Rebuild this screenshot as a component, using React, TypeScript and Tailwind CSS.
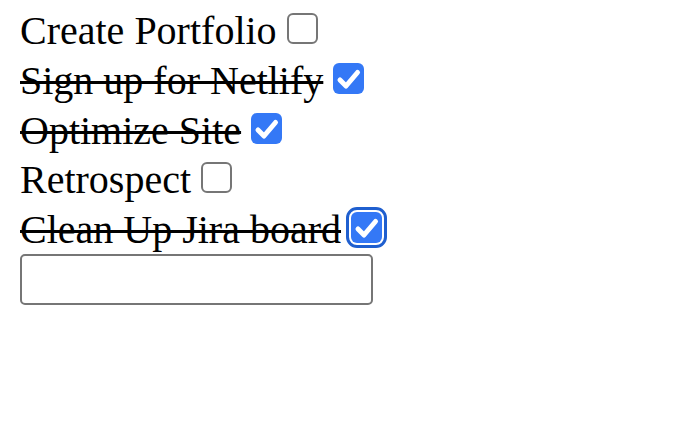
import React from "react";

const items = [
  { text: "Create Portfolio", done: false, focus: false },
  { text: "Sign up for Netlify", done: true, focus: false },
  { text: "Optimize Site", done: true, focus: false },
  { text: "Retrospect", done: false, focus: false },
  { text: "Clean Up Jira board", done: true, focus: true },
];

function Box({ done, focus }: { done: boolean; focus: boolean }) {
  if (!done) {
    return (
      <span className="inline-block align-baseline ml-[10px] w-[31px] h-[31px] rounded-[6px] border-[2.5px] border-[#767676] bg-white" />
    );
  }
  return (
    <span
      className={
        "inline-block align-baseline ml-[10px] w-[31px] h-[31px] rounded-[6px] bg-[#3478f6] relative " +
        (focus ? "outline-[3.5px] outline-solid outline-[#1f5fcf] outline-offset-[2px]" : "")
      }
    >
      <svg className="absolute inset-0" width="31" height="31" viewBox="0 0 31 31">
        <polyline
          points="7,17 13,23 24.5,9.5"
          fill="none"
          stroke="white"
          strokeWidth="5"
          strokeLinecap="round"
          strokeLinejoin="round"
        />
      </svg>
    </span>
  );
}

export default function App() {
  return (
    <div className="w-[700px] h-[424px] bg-white text-black pt-[6px] px-[20px] font-['Liberation_Serif','Times_New_Roman',serif]">
      {items.map((it) => (
        <div key={it.text} className="h-[49.75px] leading-[49.75px] text-[40px] whitespace-nowrap">
          <span className={it.done ? "line-through decoration-[2.5px]" : ""}>{it.text}</span>
          <Box done={it.done} focus={it.focus} />
        </div>
      ))}
      <input
        type="text"
        className="block mt-[-1px] w-[353px] h-[51px] rounded-[5px] border-[2.5px] border-[#767676] bg-white outline-none"
      />
    </div>
  );
}
